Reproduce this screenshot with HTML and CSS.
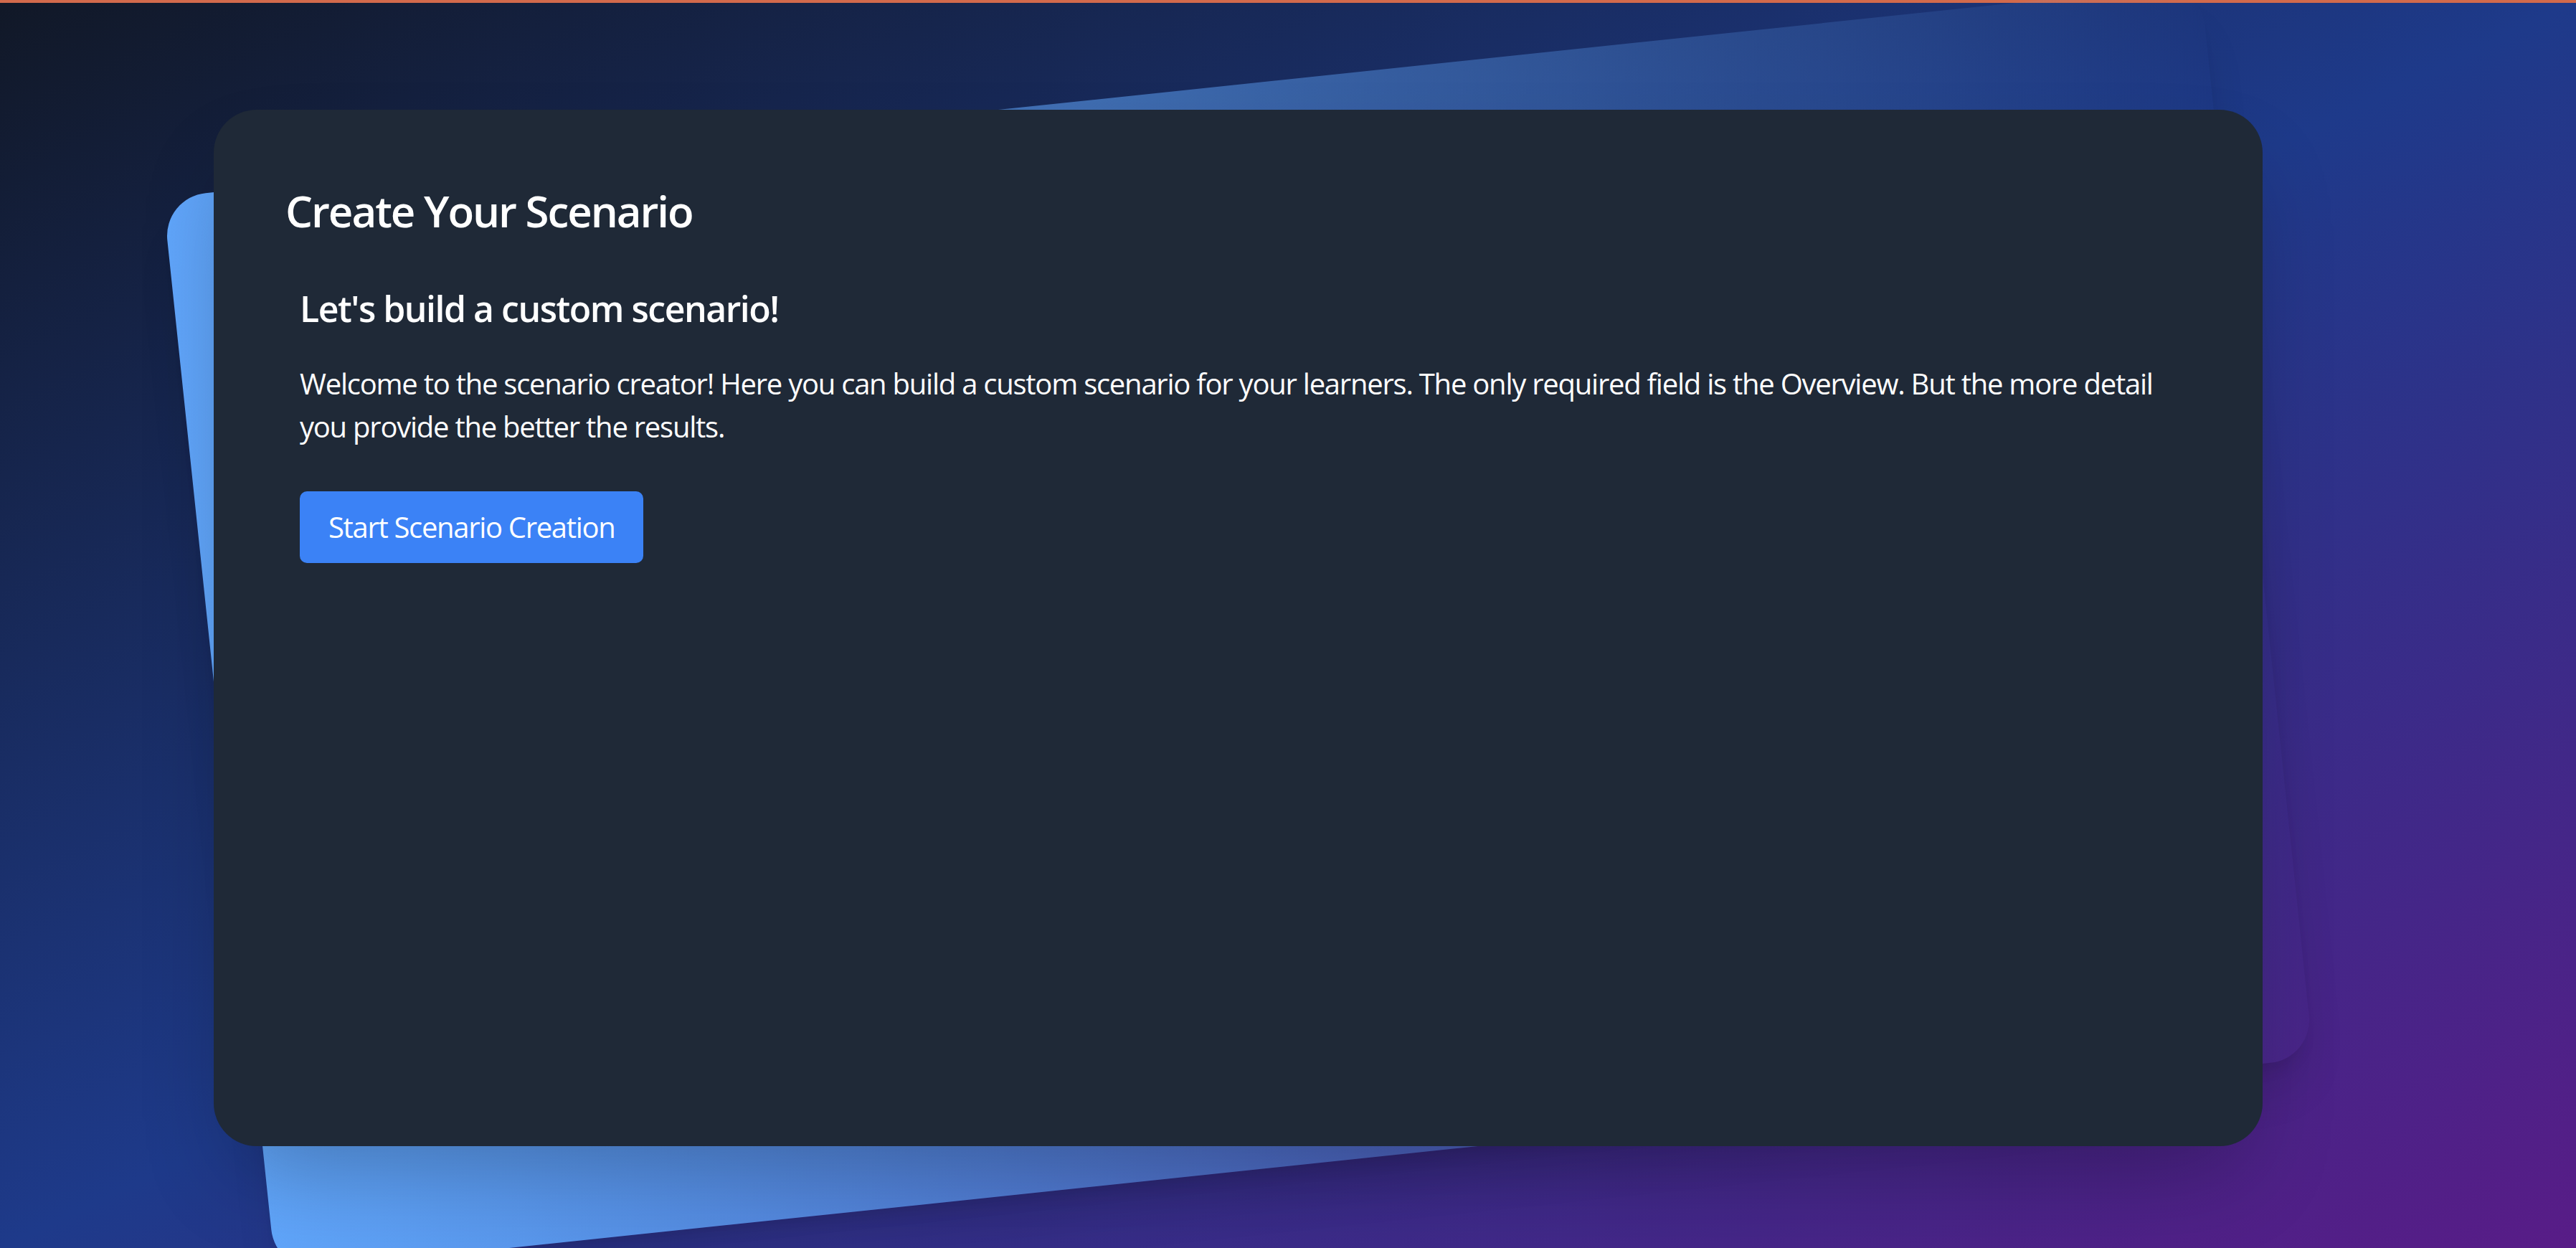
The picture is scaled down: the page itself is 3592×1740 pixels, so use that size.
FILE: index.html
```html
<!DOCTYPE html>
<html lang="en">
<head>
    <meta charset="UTF-8">
    <meta name="viewport" content="width=device-width, initial-scale=1.0">
    <title>Create Your Scenario</title>
    <link rel="stylesheet" href="styles.css">
</head>
<body>
    <div class="topbar"></div>

    <main class="stage">
        <div class="card-wrap">
            <!-- tilted panel behind the main card -->
            <div class="card-back"></div>

            <section class="card">
                <h1 class="card-title">Create Your Scenario</h1>

                <div class="intro">
                    <h2>Let's build a custom scenario!</h2>
                    <p>Welcome to the scenario creator! Here you can build a custom scenario for your learners. The only required field is the Overview. But the more detail you provide the better the results.</p>
                    <button type="button" class="btn-primary">Start Scenario Creation</button>
                </div>
            </section>
        </div>
    </main>
</body>
</html>
```

FILE: styles.css
```css
html, body {
    margin: 0;
    height: 100%;
}
body {
    font-family: "Open Sans", "Noto Sans", sans-serif;
    color: #fff;
    background: linear-gradient(to bottom right, #111827, #1e3a8a, #581c87);
    overflow: hidden;
}
.topbar {
    height: 4px;
    background-color: #d26a4c;
}
.stage {
    padding: 149px 0 0 298px;
}
.card-wrap {
    position: relative;
    width: 2857px;
}
.card-back {
    position: absolute;
    left: 0;
    right: 0;
    top: -31px;
    bottom: -31px;
    border-radius: 60px;
    background: linear-gradient(to right, #60a5fa, rgba(96, 165, 250, 0));
    box-shadow: 0 50px 62px -12px rgba(0, 0, 0, 0.1), 0 20px 25px -15px rgba(0, 0, 0, 0.1);
    transform: rotate(-6deg);
}
.card {
    position: relative;
    box-sizing: border-box;
    height: 1445px;
    padding: 100px;
    background-color: #1f2937;
    border-radius: 60px;
    box-shadow: 0 62px 125px -30px rgba(0, 0, 0, 0.25);
}
.card-title {
    margin: 0 0 40px;
    font-size: 60px;
    line-height: 82px;
    font-weight: 600;
    letter-spacing: -0.034em; /* Open Sans is wider than the original face */
}
.intro {
    padding: 20px;
}
.intro h2 {
    margin: 0 0 40px;
    font-size: 50px;
    line-height: 70px;
    font-weight: 600;
    letter-spacing: -0.03em;
}
.intro p {
    margin: 0 0 60px;
    font-size: 40px;
    line-height: 60px;
    letter-spacing: -0.031em;
}
.btn-primary {
    padding: 20px 40px;
    font-family: inherit;
    font-size: 40px;
    line-height: 60px;
    letter-spacing: -0.033em;
    color: #fff;
    background-color: #3b82f6;
    border: none;
    border-radius: 10px;
    cursor: pointer;
}
```
